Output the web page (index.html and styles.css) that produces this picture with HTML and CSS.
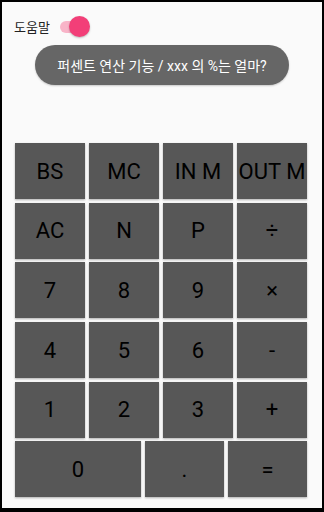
FILE: index.html
```html
<!DOCTYPE html>
<html lang="ko">
<head>
<meta charset="utf-8">
<link rel="stylesheet" href="styles.css">
</head>
<body>
<div class="screen">
  <div class="help-row">
    <span class="help-label">도움말</span>
    <span class="switch"><span class="track"></span><span class="thumb"></span></span>
  </div>
  <div class="pill">퍼센트 연산 기능 / xxx 의 %는 얼마?</div>
  <div class="pad">
    <div class="row">
      <div class="key">BS</div><div class="key">MC</div><div class="key">IN M</div><div class="key">OUT M</div>
    </div>
    <div class="row">
      <div class="key">AC</div><div class="key">N</div><div class="key">P</div><div class="key">÷</div>
    </div>
    <div class="row">
      <div class="key">7</div><div class="key">8</div><div class="key">9</div><div class="key">×</div>
    </div>
    <div class="row">
      <div class="key">4</div><div class="key">5</div><div class="key">6</div><div class="key">-</div>
    </div>
    <div class="row">
      <div class="key">1</div><div class="key">2</div><div class="key">3</div><div class="key">+</div>
    </div>
    <div class="row last">
      <div class="key zero">0</div><div class="key">.</div><div class="key">=</div>
    </div>
  </div>
</div>
</body>
</html>
```
FILE: styles.css
```css
html, body {
  margin: 0;
  padding: 0;
  background: #000;
}
body {
  width: 324px;
  height: 512px;
  padding: 2px 2px 4px 2px;
  box-sizing: border-box;
}
.screen {
  background: #fafafa;
  height: 100%;
  box-sizing: border-box;
  font-family: Roboto, "Noto Sans CJK KR", sans-serif;
  padding: 0 13px 0 13px;
}
.help-row {
  display: flex;
  align-items: center;
  height: 49px;
}
.help-label {
  font-size: 13px;
  color: #222;
  margin-left: -1px;
}
.switch {
  position: relative;
  width: 32px;
  height: 22px;
  margin-left: 10px;
}
.track {
  position: absolute;
  left: 0;
  top: 5px;
  width: 28px;
  height: 12px;
  border-radius: 6px;
  background: #f8b4c8;
}
.thumb {
  position: absolute;
  left: 9px;
  top: 0;
  width: 21px;
  height: 21px;
  border-radius: 50%;
  background: #f23f78;
  box-shadow: 0 1px 2px rgba(0,0,0,0.25);
}
.pill {
  margin: -6px 20px 0 20px;
  height: 40px;
  border-radius: 20px;
  background: #666;
  color: #fff;
  font-size: 14px;
  display: flex;
  align-items: center;
  justify-content: center;
  box-shadow: 0 1px 2px rgba(0,0,0,0.2);
}
.pad {
  margin-top: 58px;
  display: flex;
  flex-direction: column;
  gap: 3.7px;
}
.row {
  display: grid;
  grid-template-columns: repeat(4, 70px);
  gap: 4px;
}
.row.last {
  grid-template-columns: 126px 79px 79px;
}
.key {
  height: 56px;
  background: #575757;
  color: #000;
  font-size: 22px;
  font-weight: 400;
  display: flex;
  align-items: center;
  justify-content: center;
  box-shadow: 0 1px 2px rgba(0,0,0,0.3);
  white-space: nowrap;
  overflow: hidden;
}
```
